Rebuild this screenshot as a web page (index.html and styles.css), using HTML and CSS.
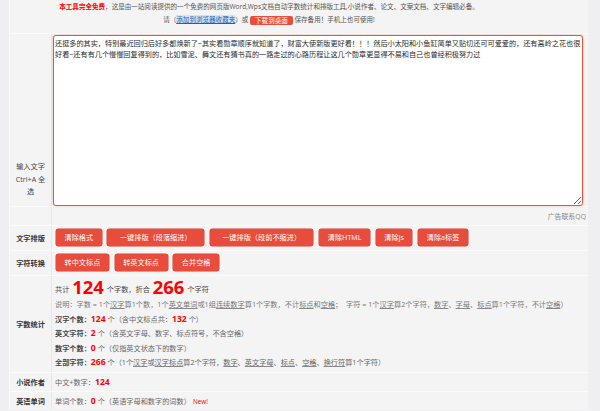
FILE: index.html
```html
<!DOCTYPE html>
<html lang="zh-CN">
<head>
<meta charset="utf-8">
<title>字数统计</title>
<link rel="stylesheet" href="styles.css">
</head>
<body>
<div class="page">
  <div class="head">
    <p class="hl"><b class="free">本工具完全免费</b>，这是由一站阅读提供的一个免费的网页版Word,Wps文档自动字数统计和排版工具,小说作者、论文、文案文档、文字编辑必备。</p>
    <p class="hl">请（<a class="fav" href="#">添加到浏览器收藏夹</a>）或 <span class="dl">下载到桌面</span> 保存备用！手机上也可使用!</p>
  </div>

  <div class="row row-input">
    <div class="lab lab-input">输入文字 Ctrl+A 全选</div>
    <div class="cell cell-input"><textarea class="ta" spellcheck="false">还挺多的其实，特别最近回归后好多都焕新了~其实看勋章顺序就知道了，财富大使新版更好看！！！然后小太阳和小鱼缸简单又贴切还可可爱爱的，还有高岭之花也很好看~还有有几个慢慢回复得到的，比如雪泥、舞文还有猜书真的一路走过的心路历程让这几个勋章更显得不易和自己也曾经积极努力过</textarea></div>
  </div>

  <div class="row row-ad">
    <div class="lab"></div>
    <div class="cell cell-ad">广告联系QQ</div>
  </div>

  <div class="row row-btn">
    <div class="lab">文字排版</div>
    <div class="cell btns">
      <span class="btn">清除格式</span>
      <span class="btn btn-wide">一键排版（段落缩进）</span>
      <span class="btn btn-wide">一键排版（段前不缩进）</span>
      <span class="btn">清除HTML</span>
      <span class="btn">清除js</span>
      <span class="btn">清除a标签</span>
    </div>
  </div>

  <div class="row row-btn">
    <div class="lab">字符转换</div>
    <div class="cell btns">
      <span class="btn">转中文标点</span>
      <span class="btn">转英文标点</span>
      <span class="btn">合并空格</span>
    </div>
  </div>

  <div class="row row-stat">
    <div class="lab">字数统计</div>
    <div class="cell stat">
      <p class="total">共计 <b class="big">124</b> 个字数，折合 <b class="big">266</b> 个字符</p>
      <p class="sl note">说明：字数 = 1个<u>汉字</u>算1个数，1个<u>英文单词</u>或1组<u>连续数字</u>算1个字数，不计<u>标点</u>和<u>空格</u>；&nbsp; 字符 = 1个<u>汉字</u>算2个字符，<u>数字</u>、<u>字母</u>、<u>标点</u>算1个字符，不计<u>空格</u>）</p>
      <p class="sl"><b class="k">汉字个数：</b><b class="num">124</b> 个（含中文标点共：<b class="num">132</b> 个）</p>
      <p class="sl"><b class="k">英文字符：</b><b class="num">2</b> 个（含英文字母、数字、标点符号，不含空格）</p>
      <p class="sl"><b class="k">数字个数：</b><b class="num">0</b> 个（仅指英文状态下的数字）</p>
      <p class="sl"><b class="k">全部字符：</b><b class="num">266</b> 个（1个<u>汉字</u>或<u>汉字标点</u>算2个字符，<u>数字</u>、<u>英文字母</u>、<u>标点</u>、<u>空格</u>、<u>换行符</u>算1个字符）</p>
    </div>
  </div>

  <div class="row row-small">
    <div class="lab">小说作者</div>
    <div class="cell one">中文+数字：<b class="num">124</b></div>
  </div>

  <div class="row row-small">
    <div class="lab">英语单词</div>
    <div class="cell one">单词个数：<b class="num">0</b> 个（英语字母和数字的词数）<span class="new">New!</span></div>
  </div>
</div>
</body>
</html>
```

FILE: styles.css
```css
* { box-sizing: border-box; }

html, body {
  margin: 0;
  padding: 0;
}

body {
  background: #efeef0;
  font-family: "Open Sans", "Noto Sans CJK SC", sans-serif;
  color: #555;
}

p { margin: 0; }

.page {
  width: 579px;
  margin-left: 9px;
  background: #f4f4f4;
  border-left: 1px solid #f9f9f9;
}

/* header notice */
.head {
  height: 33px;
  padding-right: 60px;
  text-align: center;
  font-size: 6.55px;
  color: #555;
}

.hl {
  line-height: 13px;
  white-space: nowrap;
}

.free {
  color: #f00;
  font-weight: bold;
}

.fav {
  color: #1f5fb0;
  background: #d6e4f4;
  text-decoration: underline;
}

.dl {
  display: inline-block;
  height: 9.5px;
  line-height: 9.5px;
  padding: 0 5px;
  background: #e74c3c;
  color: #fff;
  border-radius: 2px;
  vertical-align: middle;
}

/* table rows */
.row {
  display: grid;
  grid-template-columns: 42px 1fr;
  border-top: 1px solid #fbfbfb;
}

.lab {
  border-right: 1px solid #e7e7e7;
  font-size: 7.18px;
  font-weight: bold;
  color: #333;
  text-align: center;
  display: flex;
  align-items: center;
  justify-content: center;
}

.cell {
  font-size: 7.18px;
}

/* input row */
.row-input { height: 173px; }

.lab-input {
  align-items: flex-start;
  padding: 126px 4px 0;
  line-height: 12.5px;
  font-weight: normal;
  color: #444;
}

.cell-input {
  padding: 1px 0 0 1px;
}

.ta {
  display: block;
  width: 530px;
  height: 171px;
  margin: 0;
  padding: 2px 0 0 1px;
  border: 1px solid #e8553d;
  border-radius: 3px;
  box-shadow: 0 0 2px rgba(232, 85, 61, 0.55);
  background: #fff;
  font-family: "Open Sans", "Noto Sans CJK SC", sans-serif;
  font-size: 7.15px;
  line-height: 10.5px;
  color: #2a2a2a;
  outline: none;
}

/* ad row */
.row-ad { height: 19px; }

.cell-ad {
  display: flex;
  align-items: center;
  justify-content: flex-end;
  padding-right: 2px;
  color: #888;
  font-size: 6.9px;
}

/* button rows */
.row-btn { height: 25px; }

.btns {
  display: flex;
  align-items: flex-start;
  gap: 5.8px;
  padding: 3px 0 0 4px;
}

.btn {
  display: inline-block;
  height: 16.5px;
  line-height: 16.5px;
  padding: 0 8.5px;
  background: #e74c3c;
  color: #fff;
  border-radius: 2.5px;
  box-shadow: 0 0 0 0.5px #cf4330;
  white-space: nowrap;
}

.btn-wide { padding: 0 12.4px; }

/* stats row */
.row-stat { height: 97px; }

.stat {
  padding: 1px 0 0 3px;
  color: #666;
}

.total {
  height: 20px;
  line-height: 20px;
  color: #444;
  white-space: nowrap;
}

.big {
  font-size: 18.5px;
  color: #f00;
  font-weight: bold;
  vertical-align: -2px;
  margin: 0 1px;
}

.sl {
  line-height: 14.5px;
  white-space: nowrap;
}

.note {
  color: #777;
  font-size: 7.2px;
}

u {
  text-decoration: underline;
  text-decoration-color: #888;
}

.k {
  color: #444;
  font-weight: bold;
}

.num {
  color: #f00;
  font-weight: bold;
  font-size: 8.6px;
}

/* small rows */
.row-small { height: 19px; }

.one {
  display: flex;
  align-items: center;
  padding-left: 3px;
  color: #666;
  white-space: pre;
}

.new {
  color: #f00;
  font-size: 6.4px;
  margin-left: 2px;
}
```
